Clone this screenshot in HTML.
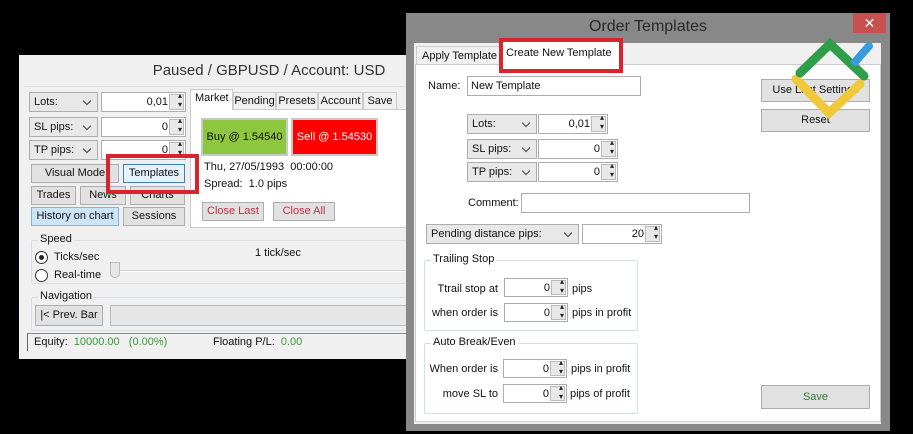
<!DOCTYPE html>
<html><head><style>
*{margin:0;padding:0;box-sizing:border-box}
body{width:913px;height:434px;background:#000;position:relative;overflow:hidden;font-family:"Liberation Sans",sans-serif;font-size:11px;color:#111;white-space:nowrap}
.a{position:absolute}
.btn{position:absolute;background:#e1e1e1;border:1px solid #adadad;text-align:center;line-height:17px;font-size:11px}
.cb{position:absolute;background:#e8e8e8;border:1px solid #acacac;padding-left:4px;line-height:19px}
.cb:after{content:"";position:absolute;right:7px;top:5px;width:5px;height:5px;border-right:1.5px solid #444;border-bottom:1.5px solid #444;transform:rotate(45deg)}
.sp{position:absolute;background:#fff;border:1px solid #abadb3;text-align:right;padding-right:17px;line-height:18px}
.sp:after{content:"";position:absolute;right:1px;top:1px;width:13px;bottom:1px;background:#e8e8e8;border:1px solid #bbb}
.sp:before{content:"▴\A▾";white-space:pre;position:absolute;right:3px;top:-2px;font-size:8px;line-height:9px;z-index:2;color:#222}
.grp{position:absolute;border:1px solid #d5dfe5;border-radius:2px}
.grp span{position:absolute;top:-8px;left:6px;background:inherit;padding:0 2px}
.red{position:absolute;border:4px solid #d9232e}
.tab{position:absolute;top:92px;height:18px;background:#f0f0f0;border:1px solid #ccc;text-align:center;line-height:16px}
</style></head><body>

<div class="a" style="left:19px;top:55px;width:390px;height:304px;background:#f0f0f0">
  <div class="a" style="left:0;right:0;top:7px;text-align:center;font-size:15px;color:#333;padding-left:110px">Paused / GBPUSD / Account: USD</div>
  <div class="a" style="left:5px;right:0;top:31px;border-top:1px solid #ddd"></div>
</div>
<div class="cb" style="left:29px;top:92px;width:69px;height:20px">Lots:</div>
<div class="sp" style="left:101px;top:92px;width:85px;height:20px">0,01</div>
<div class="cb" style="left:29px;top:117px;width:69px;height:20px">SL pips:</div>
<div class="sp" style="left:101px;top:117px;width:85px;height:20px">0</div>
<div class="cb" style="left:29px;top:140px;width:69px;height:20px">TP pips:</div>
<div class="sp" style="left:101px;top:140px;width:85px;height:20px">0</div>
<div class="btn" style="left:31px;top:164px;width:88px;height:19px">Visual Mode</div>
<div class="btn" style="left:123px;top:164px;width:62px;height:19px;background:#e5f1fb;border-color:#3c7fb1">Templates</div>
<div class="btn" style="left:31px;top:186px;width:45px;height:19px">Trades</div>
<div class="btn" style="left:80px;top:186px;width:46px;height:19px">News</div>
<div class="btn" style="left:130px;top:186px;width:55px;height:19px">Charts</div>
<div class="btn" style="left:31px;top:207px;width:88px;height:19px;background:#cce4f7;border-color:#7eb4ea">History on chart</div>
<div class="btn" style="left:123px;top:207px;width:62px;height:19px">Sessions</div>

<div class="a" style="left:190px;top:109px;width:220px;height:119px;background:#fff;border:1px solid #ccc"></div>
<div class="a" style="left:190px;top:89px;width:43px;height:21px;background:#fff;border:1px solid #ccc;border-bottom:none;padding:2px 0 0 4px">Market</div>
<div class="tab" style="left:233px;width:43px">Pending</div>
<div class="tab" style="left:276px;width:42px">Presets</div>
<div class="tab" style="left:318px;width:45px">Account</div>
<div class="tab" style="left:363px;width:34px">Save</div>
<div class="a" style="left:201px;top:118px;width:87px;height:38px;background:#8dc63f;border:2px solid #c8c8c8;text-align:center;line-height:34px">Buy @ 1.54540</div>
<div class="a" style="left:291px;top:118px;width:87px;height:38px;background:#f00;border:2px solid #c8c8c8;text-align:center;line-height:34px;color:#fff">Sell @ 1.54530</div>
<div class="a" style="left:204px;top:161px">Thu, 27/05/1993&nbsp; 00:00:00</div>
<div class="a" style="left:204px;top:178px">Spread:&nbsp; 1.0 pips</div>
<div class="btn" style="left:202px;top:202px;width:62px;height:19px;color:#c0304a">Close Last</div>
<div class="btn" style="left:273px;top:202px;width:62px;height:19px;color:#c0304a">Close All</div>
<div class="red" style="left:106px;top:154px;width:93px;height:40px"></div>

<div class="grp" style="left:31px;top:240px;width:380px;height:44px;border-right:none"><span style="background:#f0f0f0">Speed</span></div>
<div class="a" style="left:35px;top:251px;width:13px;height:13px;border:1px solid #333;border-radius:50%;background:#fff"></div>
<div class="a" style="left:39px;top:255px;width:5px;height:5px;border-radius:50%;background:#222"></div>
<div class="a" style="left:54px;top:251px">Ticks/sec</div>
<div class="a" style="left:35px;top:269px;width:13px;height:13px;border:1px solid #333;border-radius:50%;background:#fff"></div>
<div class="a" style="left:54px;top:269px">Real-time</div>
<div class="a" style="left:255px;top:247px">1 tick/sec</div>
<div class="a" style="left:113px;top:270px;width:300px;border-top:1px solid #d0d0d0;border-bottom:1px solid #fff"></div>
<div class="a" style="left:110px;top:262px;width:10px;height:16px;background:#e6e6e6;border:1px solid #bbb;border-radius:0 0 5px 5px"></div>
<div class="grp" style="left:31px;top:297px;width:380px;height:34px;border-right:none"><span style="background:#f0f0f0">Navigation</span></div>
<div class="btn" style="left:35px;top:305px;width:68px;height:21px;line-height:19px">|&lt; Prev. Bar</div>
<div class="a" style="left:110px;top:305px;width:300px;height:21px;background:#e6e6e6;border:1px solid #bbb"></div>
<div class="a" style="left:27px;top:333px;width:385px;height:18px;border-top:1px solid #888;border-left:1px solid #666;padding:2px 0 0 6px">Equity:&nbsp; <span style="color:#3a9a3a">10000.00&nbsp;&nbsp; (0.00%)</span><span style="position:absolute;left:185px">Floating P/L:&nbsp; <span style="color:#3a9a3a">0.00</span></span></div>

<div class="a" style="left:406px;top:13px;width:484px;height:418px;background:#888"></div>
<div class="a" style="left:406px;top:18px;width:484px;text-align:center;font-size:16px;color:#2a2a2a">Order Templates</div>
<div class="a" style="left:853px;top:13px;width:33px;height:20px;background:#c75050;color:#fff;text-align:center;font-size:14px;line-height:20px">✕</div>
<div class="a" style="left:414px;top:43px;width:467px;height:381px;background:#f0f0f0"></div>
<div class="a" style="left:415px;top:64px;width:466px;height:358px;background:#fff;border:1px solid #ccc"></div>
<div class="a" style="left:416px;top:46px;width:84px;height:19px;background:#f0f0f0;border:1px solid #ccc;padding:3px 0 0 5px">Apply Template</div>
<div class="a" style="left:500px;top:42px;width:121px;height:24px;background:#fff;padding:5px 0 0 6px">Create New Template</div>
<div class="red" style="left:499px;top:38px;width:124px;height:35px"></div>

<div class="a" style="left:428px;top:80px">Name:</div>
<div class="a" style="left:467px;top:76px;width:174px;height:20px;border:1px solid #abadb3;padding:3px 3px;background:#fff">New Template</div>
<div class="cb" style="left:467px;top:114px;width:70px;height:20px">Lots:</div>
<div class="sp" style="left:538px;top:114px;width:70px;height:20px">0,01</div>
<div class="cb" style="left:467px;top:139px;width:70px;height:20px">SL pips:</div>
<div class="sp" style="left:538px;top:139px;width:80px;height:20px">0</div>
<div class="cb" style="left:467px;top:162px;width:70px;height:20px">TP pips:</div>
<div class="sp" style="left:538px;top:162px;width:80px;height:20px">0</div>
<div class="a" style="left:468px;top:197px">Comment:</div>
<div class="a" style="left:521px;top:193px;width:229px;height:20px;border:1px solid #abadb3"></div>
<div class="cb" style="left:426px;top:224px;width:153px;height:20px">Pending distance pips:</div>
<div class="sp" style="left:582px;top:224px;width:80px;height:20px">20</div>

<div class="grp" style="left:424px;top:260px;width:214px;height:71px;background:#fff"><span>Trailing Stop</span></div>
<div class="a" style="left:424px;top:283px;width:74px;text-align:right">Ttrail stop at</div>
<div class="sp" style="left:504px;top:278px;width:64px;height:19px">0</div>
<div class="a" style="left:572px;top:283px">pips</div>
<div class="a" style="left:424px;top:307px;width:74px;text-align:right">when order is</div>
<div class="sp" style="left:504px;top:303px;width:64px;height:19px">0</div>
<div class="a" style="left:572px;top:307px">pips in profit</div>

<div class="grp" style="left:424px;top:343px;width:214px;height:71px;background:#fff"><span>Auto Break/Even</span></div>
<div class="a" style="left:424px;top:363px;width:74px;text-align:right">When order is</div>
<div class="sp" style="left:503px;top:359px;width:64px;height:19px">0</div>
<div class="a" style="left:571px;top:363px">pips in profit</div>
<div class="a" style="left:424px;top:388px;width:74px;text-align:right">move SL to</div>
<div class="sp" style="left:503px;top:384px;width:64px;height:19px">0</div>
<div class="a" style="left:570px;top:388px">pips of profit</div>

<div class="btn" style="left:761px;top:79px;width:109px;height:23px;line-height:21px">Use Last Settings</div>
<div class="btn" style="left:761px;top:109px;width:109px;height:23px;line-height:21px">Reset</div>
<div class="btn" style="left:761px;top:385px;width:109px;height:24px;line-height:22px;color:#2e7d32">Save</div>

<svg class="a" style="left:780px;top:35px" width="110" height="95" viewBox="780 35 110 95">
  <polyline points="796,79 829,113 860,84" fill="none" stroke="#f0c93a" stroke-width="9" stroke-linecap="round"/>
  <polyline points="800,73 830,44 864,76" fill="none" stroke="#2e9e48" stroke-width="9" stroke-linecap="round"/>
  <line x1="855" y1="62" x2="869" y2="46" stroke="#3a9ae0" stroke-width="8" stroke-linecap="round"/>
</svg>
</body></html>
